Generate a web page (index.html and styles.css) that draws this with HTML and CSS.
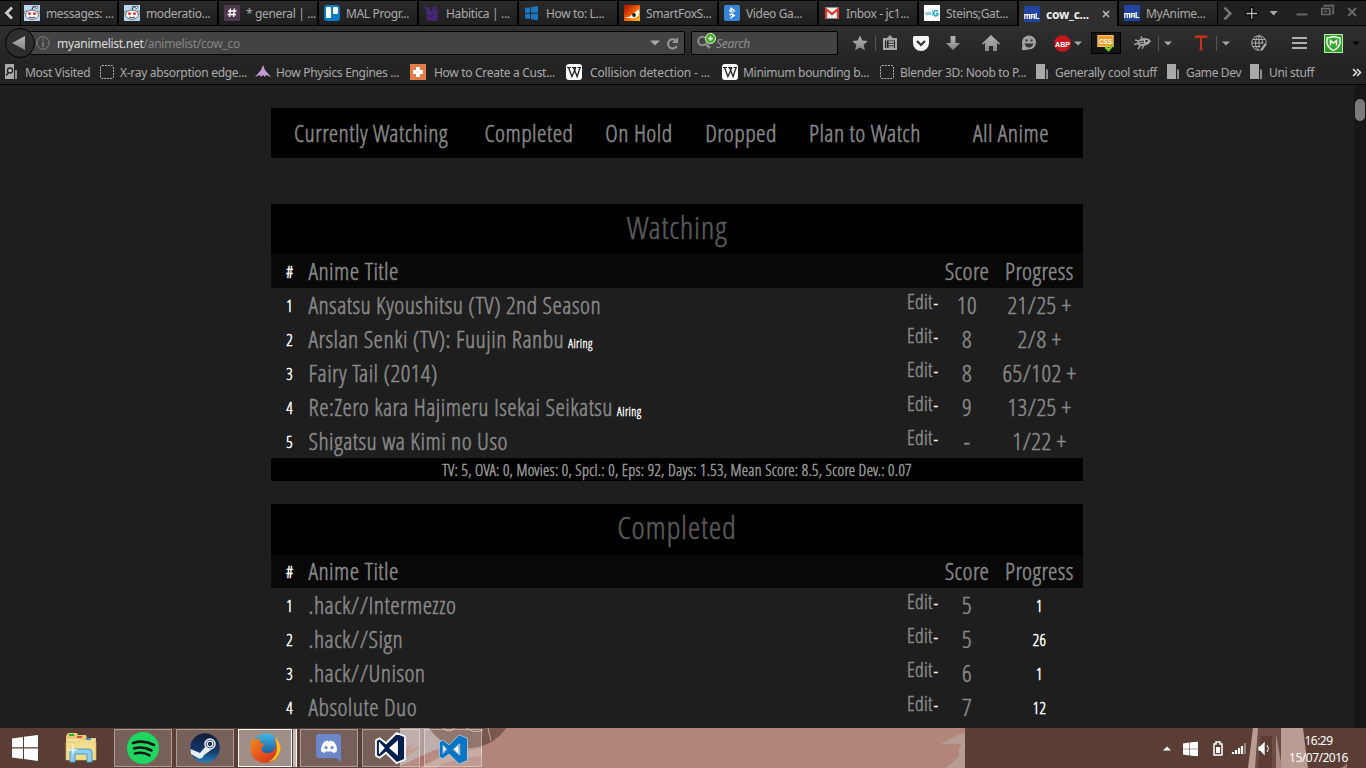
FILE: index.html
```html
<!DOCTYPE html>
<html lang="en">
<head>
<meta charset="utf-8">
<title>cow_co's Anime List</title>
<link rel="stylesheet" href="styles.css">
</head>
<body>
<svg width="0" height="0" class="defs">
  <defs>
    <linearGradient id="grey" x1="0" y1="0" x2="0" y2="1"><stop offset="0" stop-color="#b5b5b5"/><stop offset="1" stop-color="#858585"/></linearGradient>
    <linearGradient id="fox" x1="0" y1="0" x2="1" y2="1"><stop offset="0" stop-color="#a80b00"/><stop offset=".5" stop-color="#f05a00"/><stop offset="1" stop-color="#ffc21a"/></linearGradient>
    <linearGradient id="steamg" x1="0" y1="0" x2="0" y2="1"><stop offset="0" stop-color="#101b38"/><stop offset=".6" stop-color="#14386a"/><stop offset="1" stop-color="#2581b8"/></linearGradient>
    <linearGradient id="ffo" x1="0" y1="0" x2="1" y2="1"><stop offset="0" stop-color="#f08a1c"/><stop offset=".5" stop-color="#e8551c"/><stop offset="1" stop-color="#c72b18"/></linearGradient>
    <linearGradient id="blue" x1="0" y1="0" x2="0" y2="1"><stop offset="0" stop-color="#3db8e8"/><stop offset="1" stop-color="#123c82"/></linearGradient>
    <symbol id="reddit" viewBox="0 0 16 16"><rect width="16" height="16" fill="#b9d7f4"/><path d="M8 5 9 1.5l3 .7" stroke="#333" fill="none"/><circle cx="12.5" cy="2.3" r="1.2" fill="#fff" stroke="#333" stroke-width=".7"/><circle cx="2" cy="7.5" r="1.6" fill="#fff" stroke="#555" stroke-width=".7"/><circle cx="14" cy="7.5" r="1.6" fill="#fff" stroke="#555" stroke-width=".7"/><ellipse cx="8" cy="9.7" rx="6.4" ry="4.6" fill="#fff" stroke="#444" stroke-width=".8"/><circle cx="5.5" cy="8.7" r="1.4" fill="#e5241b"/><circle cx="10.5" cy="8.7" r="1.4" fill="#e5241b"/><path d="M5 12q3 1.6 6 0" fill="none" stroke="#444"/></symbol>
    <symbol id="dash" viewBox="0 0 16 16"><rect x="1.5" y="1.5" width="13" height="13" rx="1.5" fill="none" stroke="#b5b5b5" stroke-dasharray="2 1"/></symbol>
    <symbol id="folder" viewBox="0 0 16 16"><path d="M1 0h9v15H1z" fill="#a9a9a9"/><path d="M11 8V5l2 1v9h-2" fill="#8f8f8f"/></symbol>
    <symbol id="wiki" viewBox="0 0 16 16"><rect width="16" height="16" rx="3" fill="#fff"/><path d="M1 3.5h4M6 3.5h4M11.5 3.5H15" stroke="#222"/><path d="m2.5 3.5 3.4 9 4-9M7.5 3.5l3.6 9 3-9" fill="none" stroke="#222" stroke-width="1.3"/></symbol>
    <symbol id="mal" viewBox="0 0 16 16"><rect width="16" height="16" fill="#2144a0"/><path d="M.8 13V8.700h4.700V13M3.200 8.700V13M7.200 13V8.700h3.300V13M7.200 11h3.300M12.200 7v5.500h3.200" fill="none" stroke="#fff" stroke-width="1.200"/></symbol>
    <symbol id="win" viewBox="0 0 26 26"><path d="m0 3.5 11-1.6v10.4H0zM12 1.8 26 0v12.3H12zM0 13.5h11V24L0 22.4zM12 13.5h14V26l-14-1.9z"/></symbol>
    <symbol id="tri" viewBox="0 0 10 6"><path d="M0 .5h10L5 5.5z"/></symbol>
    <symbol id="vs" viewBox="0 0 32 32"><path d="M21.5 1 30 4.5v23L21.5 31 11 20.8 4.6 25.6 1 23.8V8.2l3.6-1.8L11 11.2zM22 10.2 15.4 16l6.6 5.8zM4.8 11.8v8.4L8.600 16z" fill-rule="evenodd"/></symbol>
  </defs>
</svg>

<header class="chrome">
  <div class="tabs">
    <div class="scroll-left"><svg width="12" height="14" viewBox="0 0 12 14"><path d="M9 1.500 3.500 7 9 12.500" fill="none" stroke="#ccc" stroke-width="2.800"/></svg></div>
    <div class="tab first"><svg class="fav"><use href="#reddit"/></svg><span>messages: ...</span></div>
    <div class="tab"><svg class="fav"><use href="#reddit"/></svg><span>moderatio...</span></div>
    <div class="tab"><svg class="fav" viewBox="0 0 16 16"><rect width="16" height="16" fill="#4d394b"/><path d="M6.500 3.500 5.500 12M10.500 3.500 9.500 12M4 6h8.500M3.500 9.500H12" stroke="#fff" stroke-width="1.500"/></svg><span>* general | ...</span></div>
    <div class="tab"><svg class="fav" viewBox="0 0 16 16"><rect width="16" height="16" rx="3" fill="#0a7bc2"/><rect x="2" y="2" width="5" height="11" rx="1" fill="#fff"/><rect x="9" y="2" width="5" height="7" rx="1" fill="#fff"/></svg><span>MAL Progr...</span></div>
    <div class="tab"><svg class="fav" viewBox="0 0 16 16"><path d="m0 0 5 3 2 3 2-1-1-2 2-2h3l-1 2 3 1-2 2 1 2-1 3 2 1-2 2 1 3H8l1-1-3-1-1 2H2l2-3-2-2 2-1-3-3 2-1z" fill="#432874"/><path d="M10 4h3M8 8l3 3M5 11h3" stroke="#242424" stroke-width=".8"/></svg><span>Habitica | ...</span></div>
    <div class="tab"><svg class="fav" viewBox="0 0 16 16"><path d="m1 3 5-.8v5.500H1zM7 2l7-1v6.700H7zM1 8.700h5v5.300l-5-.8zM7 8.700h7v6.500l-7-1z" fill="#1a78c2"/></svg><span>How to: L...</span></div>
    <div class="tab"><svg class="fav" viewBox="0 0 16 16"><rect width="16" height="16" fill="url(#fox)"/><path d="m0 13 5-1 10-8q1 6-2 8-3 2-7 1z" fill="#fff"/><circle cx="10" cy="10" r="1.900" fill="#221"/></svg><span>SmartFoxS...</span></div>
    <div class="tab"><svg class="fav" viewBox="0 0 16 16"><rect width="16" height="16" rx="2" fill="#3584d8"/><path d="m7 2 4.500 4L8 8.500 5 6zM8 8l3.500 2.500L6 14l1-3-2-2z" fill="#fff"/><path d="m8 5 1.500 1.500L7 8M7 11l1-1" stroke="#3584d8" fill="none"/></svg><span>Video Ga...</span></div>
    <div class="tab"><svg class="fav" viewBox="0 0 16 16"><path d="M1 2.500h14v11H1z" fill="#eee"/><path d="M2 13.500V4l6 5 6-5v9.500" fill="none" stroke="#d9392b" stroke-width="2.200"/></svg><span>Inbox - jc1...</span></div>
    <div class="tab"><svg class="fav" viewBox="0 0 16 16"><rect width="16" height="16" fill="#fff"/><text x="1" y="9.500" class="usg">us</text><path d="M8.500 4v7" stroke="#9cd"/><path d="M14 6.500q-2.500-2-4 .2-1 3.300 1.300 4.200 2.700.2 2.700-2.400h-2" fill="none" stroke="#20a6c6" stroke-width="1.500"/></svg><span>Steins;Gat...</span></div>
    <div class="tab active"><svg class="fav"><use href="#mal"/></svg><span>cow_c...</span><svg class="close" width="8" height="8" viewBox="0 0 8 8"><path d="m1 1 6 6M7 1 1 7" stroke="#b5b5b5" stroke-width="1.700"/></svg></div>
    <div class="tab"><svg class="fav"><use href="#mal"/></svg><span>MyAnime...</span></div>
    <svg class="strip-end" width="148" height="25" viewBox="0 0 148 25" fill="none">
      <path d="m6.500 6.500 6 6-6 6" stroke="#777" stroke-width="2.500"/>
      <path d="M27.500 12.500h13M34 6v13" stroke="#000" stroke-width="3.500"/><path d="M28.500 12.500h11M34 7v11" stroke="#bbb" stroke-width="1.300"/>
      <path d="M52 10h8l-4 4.500z" fill="#aaa"/>
      <path d="M79 13.500h11" stroke="#666" stroke-width="2"/>
      <path d="M107 6V4.500h9v8h-1.500M104.500 7.500h8v6h-8zM107 10.500h3" stroke="#686868" stroke-width="1.700"/>
      <path d="m131 7 8 8M139 7l-8 8" stroke="#686868" stroke-width="2"/>
    </svg>
  </div>

  <div class="toolbar">
    <div class="back"><svg width="14" height="16" viewBox="0 0 14 16"><path d="M13 1v14L0 8z" fill="url(#grey)"/></svg></div>
    <div class="urlbar">
      <svg width="14" height="14" viewBox="0 0 14 14"><circle cx="7" cy="7" r="6.200" fill="none" stroke="#858585"/><path d="M7 6v5M7 3.200v1.600" stroke="#858585" stroke-width="1.400"/></svg>
      <span class="url"><b>myanimelist.net</b>/animelist/cow_co</span>
      <svg class="drop" width="10" height="6" fill="#aaa"><use href="#tri"/></svg>
      <svg class="reload" width="13" height="13" viewBox="0 0 13 13"><path d="M9.500 3.200A4.600 4.600 0 1 0 10.800 9" fill="none" stroke="#999" stroke-width="2"/><path d="M12 0v6H6z" fill="#999"/></svg>
    </div>
    <div class="search">
      <svg width="20" height="18" viewBox="0 0 20 18"><circle cx="6.500" cy="9" r="4.300" fill="none" stroke="#8c8c8c" stroke-width="2"/><path d="m10 12 4 4" stroke="#8c8c8c" stroke-width="2.800"/><circle cx="14.500" cy="6.500" r="5" fill="#3fae1e" stroke="#e8f5e0"/><path d="M14.500 4v5M12 6.500h5" stroke="#fff" stroke-width="1.300"/></svg>
      <i>Search</i>
    </div>
    <div class="tools">
      <div class="tool"><svg width="16" height="16" viewBox="0 0 16 16"><path d="m8 .5 2.300 5 5.500.6-4.100 3.700 1.200 5.500L8 12.500l-4.900 2.800 1.200-5.500L.2 6.100l5.500-.6z" fill="url(#grey)"/></svg></div>
      <div class="tool sep"><svg width="16" height="16" viewBox="0 0 16 16"><path d="M1 3h4l3-3 3 3h4v12H1z" fill="#a6a6a6"/><path d="M3 5.500h10v7.500H3z" fill="#222"/><path d="M4 7h1M6.500 7H12M4 9.500h1M6.500 9.500H12M4 12h1M6.500 12H12" stroke="#bbb" stroke-width="1.300"/></svg></div>
      <div class="tool"><svg width="16" height="15" viewBox="0 0 16 15"><path d="M0 1.500Q0 0 1.500 0h13Q16 0 16 1.500V7a8 8 0 0 1-16 0z" fill="#f5f5f5"/><path d="m4 5 4 4 4-4" fill="none" stroke="#333" stroke-width="2.200"/></svg></div>
      <div class="tool"><svg width="16" height="16" viewBox="0 0 16 16"><path d="M5.500 1h5v7H15l-7 7-7-7h4.500z" fill="url(#grey)"/></svg></div>
      <div class="tool home"><svg width="18" height="16" viewBox="0 0 18 16"><path d="m9 0 9 8.500-1 1.200-2-1.800V16h-4v-5H7v5H3V7.900L1 9.700 0 8.500z" fill="url(#grey)"/></svg></div>
      <div class="tool smile"><svg width="16" height="16" viewBox="0 0 16 16"><circle cx="8" cy="7.500" r="7" fill="#a3a3a3"/><path d="M1 10v5h6z" fill="#a3a3a3"/><path d="M3.500 8.500h9q-1 4-4.500 4t-4.500-4M4.500 4.500h2v2h-2zM9.500 4.500h2v2h-2z" fill="#333"/></svg></div>
      <div class="tool abp"><svg width="17" height="17" viewBox="0 0 17 17"><path d="M5 .5h7L16.500 5v7L12 16.500H5L.5 12V5z" fill="#c9151b"/><text x="8.500" y="11.500" text-anchor="middle" class="abp-t" textLength="15" lengthAdjust="spacingAndGlyphs">ABP</text></svg></div>
      <div class="tool caret"><svg width="8" height="5" fill="#a5a5a5"><use href="#tri"/></svg></div>
      <div class="tool css"><svg width="18" height="18" viewBox="0 0 18 18"><rect x=".5" y="1" width="16" height="12" fill="#ef9a2b"/><rect x="1" y="1.500" width="15" height="11" fill="none" stroke="#f8c46f"/><text x="8.500" y="9.500" text-anchor="middle" class="css-t" textLength="13" lengthAdjust="spacingAndGlyphs">CSS</text><path d="m8.500 13 3 3 4.500-5" fill="none" stroke="#7ed321" stroke-width="2.500"/></svg></div>
      <div class="tool bug"><svg width="18" height="14" viewBox="0 0 18 14"><path d="M3 7q2-5 7-5 5 0 7 3-2 4-7 5H5z" fill="#a0a0a0"/><circle cx="12.500" cy="5" r="1.800" fill="#222" stroke="#ddd" stroke-width=".8"/><path d="M5 5 1 4M4 7.500l-4 1M7 9l-3 4M10 9l-2 4M8 3 7 0" stroke="#a0a0a0" stroke-width="1.300"/><path d="m5 6 5-1M6 8l4-1" stroke="#333"/></svg></div>
      <div class="tool wcaret sep"><svg width="8" height="5" fill="#a5a5a5"><use href="#tri"/></svg></div>
      <div class="tool bigt"><svg width="14" height="16" viewBox="0 0 14 16"><path d="M.5 4 1 .5h12l.5 3.500-1.500-1.300H8V14l1.500 1.300h-5L6 14V2.700H2z" fill="#cf321d"/></svg></div>
      <div class="tool wcaret sep"><svg width="8" height="5" fill="#a5a5a5"><use href="#tri"/></svg></div>
      <div class="tool globe"><svg width="17" height="17" viewBox="0 0 17 17" fill="none" stroke="#aaa"><circle cx="8" cy="8" r="7.300"/><ellipse cx="8" cy="8" rx="3.500" ry="7.300"/><path d="M8 1v14M1 8h14M2 4.500h12M2 11.500h12"/><path d="m15.500 8-6 8" stroke="#222" stroke-width="5"/><path d="m15 8.500-5 7" stroke="#aaa" stroke-width="2.200"/></svg></div>
      <div class="tool menu"><svg width="15" height="12" viewBox="0 0 15 12"><path d="M0 1h15M0 6h15M0 11h15" stroke="#b0b0b0" stroke-width="2"/></svg></div>
      <div class="tool mcafee"><svg width="19" height="19" viewBox="0 0 19 19"><rect width="19" height="19" fill="#2f9e26"/><rect x=".5" y=".5" width="18" height="18" fill="none" stroke="#b9e7a9"/><path d="m9.500 2.500 6.500 1.500v5q-1 5-6.500 7.500Q4 14 3 9V4z" fill="#38a52d" stroke="#fff" stroke-width="1.300"/><path d="M6.500 11.500V6.500l3 2.500 3-2.500v5" fill="none" stroke="#fff" stroke-width="1.500"/></svg></div>
      <div class="tool last"><svg width="8" height="5" fill="#050505"><use href="#tri"/></svg></div>
    </div>
  </div>

  <div class="bookmarks">
    <div class="bm"><svg class="fav" viewBox="0 0 16 16"><path d="M1 0h9v15H1z" fill="#aaa"/><path d="M11 9V6h2v9h-2" fill="#8f8f8f"/><circle cx="6" cy="6.500" r="2.500" fill="#bbb" stroke="#222" stroke-width="1.300"/><path d="m4.500 8.500-2.500 3" stroke="#222" stroke-width="1.500"/></svg><span>Most Visited</span></div>
    <div class="bm"><svg class="fav"><use href="#dash"/></svg><span>X-ray absorption edge...</span></div>
    <div class="bm"><svg class="fav" viewBox="0 0 16 16"><path d="m8 1 2 5 6 7-5-2-1 2-2-2-2 2-1-2-5 2 6-7z" fill="#c39bd0"/></svg><span>How Physics Engines ...</span></div>
    <div class="bm w3"><svg class="fav" viewBox="0 0 16 16"><rect width="16" height="16" fill="#e27c4c"/><path d="M6 3h4v3h3v4h-3v3H6v-3H3V6h3z" fill="#fff"/></svg><span>How to Create a Cust...</span></div>
    <div class="bm w3"><svg class="fav"><use href="#wiki"/></svg><span class="wide">Collision detection - ...</span></div>
    <div class="bm"><svg class="fav"><use href="#wiki"/></svg><span>Minimum bounding b...</span></div>
    <div class="bm"><svg class="fav"><use href="#dash"/></svg><span>Blender 3D: Noob to P...</span></div>
    <div class="bm fo"><svg class="fav"><use href="#folder"/></svg><span>Generally cool stuff</span></div>
    <div class="bm fo"><svg class="fav"><use href="#folder"/></svg><span>Game Dev</span></div>
    <div class="bm fo"><svg class="fav"><use href="#folder"/></svg><span>Uni stuff</span></div>
    <div class="more"><svg width="10" height="9" viewBox="0 0 10 9"><path d="m1 1 3.500 3.500L1 8M5 1l3.500 3.500L5 8" fill="none" stroke="#ddd" stroke-width="1.600"/></svg></div>
  </div>
</header>

<div class="viewport">
  <main class="list">
    <nav class="status">
      <a>Currently Watching</a><a>Completed</a><a>On Hold</a><a>Dropped</a><a>Plan to Watch</a><a>All Anime</a>
    </nav>

    <section class="group">
      <h2>Watching</h2>
      <div class="row head"><b class="n">#</b><span>Anime Title</span><span></span><span class="c">Score</span><span class="c p">Progress</span></div>
      <div class="row"><span class="n">1</span><span>Ansatsu Kyoushitsu (TV) 2nd Season</span><span class="e">Edit<i>-</i></span><span class="c">10</span><span class="c p">21/25 +</span></div>
      <div class="row"><span class="n">2</span><span>Arslan Senki (TV): Fuujin Ranbu <small>Airing</small></span><span class="e">Edit<i>-</i></span><span class="c">8</span><span class="c p">2/8 +</span></div>
      <div class="row"><span class="n">3</span><span>Fairy Tail (2014)</span><span class="e">Edit<i>-</i></span><span class="c">8</span><span class="c p">65/102 +</span></div>
      <div class="row"><span class="n">4</span><span>Re:Zero kara Hajimeru Isekai Seikatsu <small>Airing</small></span><span class="e">Edit<i>-</i></span><span class="c">9</span><span class="c p">13/25 +</span></div>
      <div class="row"><span class="n">5</span><span>Shigatsu wa Kimi no Uso</span><span class="e">Edit<i>-</i></span><span class="c">-</span><span class="c p">1/22 +</span></div>
      <div class="totals">TV: 5, OVA: 0, Movies: 0, Spcl.: 0, Eps: 92, Days: 1.53, Mean Score: 8.5, Score Dev.: 0.07</div>
    </section>

    <section class="group">
      <h2>Completed</h2>
      <div class="row head"><b class="n">#</b><span>Anime Title</span><span></span><span class="c">Score</span><span class="c p">Progress</span></div>
      <div class="row"><span class="n">1</span><span>.hack//Intermezzo</span><span class="e">Edit<i>-</i></span><span class="c">5</span><span class="c p n">1</span></div>
      <div class="row"><span class="n">2</span><span>.hack//Sign</span><span class="e">Edit<i>-</i></span><span class="c">5</span><span class="c p n">26</span></div>
      <div class="row"><span class="n">3</span><span>.hack//Unison</span><span class="e">Edit<i>-</i></span><span class="c">6</span><span class="c p n">1</span></div>
      <div class="row"><span class="n">4</span><span>Absolute Duo</span><span class="e">Edit<i>-</i></span><span class="c">7</span><span class="c p n">12</span></div>
    </section>
  </main>
  <div class="scrollbar"><div class="thumb"></div></div>
</div>

<footer class="taskbar">
  <svg class="wall" width="1366" height="40" viewBox="0 0 1366 40">
    <rect x="400" width="565" height="40" fill="#b2857a"/>
    <path d="M400 0h30q12 20 42 20l-22 3-50 17z" fill="#b09e9a"/>
    <path d="m400 22 14-6-4 5 12-2-22 14z" fill="#b58a7e"/>
    <path d="m400 38 34-16q25-6 48-6l-40 12-24 12h-18z" fill="#a87468"/>
    <path d="m418 40 26-12 38-8v8q-36 4-46 12z" fill="#bd9b90"/>
    <path d="M429 0h77q-12 18-35 20-26 3-42-20" fill="#7b584e"/>
    <path d="M443 0q6 6 12 0M466 0q9 6 17 2M488 0l3 13" stroke="#c2a69d" fill="none"/>
    <path d="M965 5q-15 4-25 12 12-2 20-1 3 0-1 4v8q-6 7-14 12h20z" fill="#b69d94"/>
    <path d="M1253 0h28v40h-33z" fill="#6d4c43"/><path d="M1253 0h5l-3 40h-7zM1281 0h22l5 40h-27z" fill="#b99d93"/><path d="m1276 6 6 34h-6z" fill="#a98a80"/><path d="M1261 8h11v32h-14z" fill="#5c3d34"/><path d="M1340 40q6-2 7-6v6" fill="#9a7a6c"/>
  </svg>
  <div class="task start"><svg width="26" height="26" fill="#fff"><use href="#win"/></svg></div>
  <div class="task explorer"><svg width="34" height="32" viewBox="0 0 34 32"><path d="M2 4 4 1h9l1 2h8l1 3h9v22H2z" fill="#e6cb70"/><path d="M3 7h28v19H3z" fill="#f4e3a0"/><path d="M2 10h13l2-3h8l2 3h5v18H2z" fill="#f2dc8e" stroke="#d7b85b" stroke-width=".6"/><path d="M5 2h5v2H5z" fill="#2fae3a"/><path d="M13 4h5v2h-5z" fill="#d9503a"/><path d="M22 6h5v2h-5z" fill="#3c8fd0"/><path d="M6 30V20q0-3 3-3h16q3 0 3 3v10h-5v-8H11v8z" fill="#8fcfe9" stroke="#4a9cc4"/><path d="m9 11 1 6 5 1-5 1-1 5-1-5-5-1 5-1z" fill="#fff" opacity=".8"/></svg></div>
  <div class="task btn"><svg width="32" height="32" viewBox="0 0 32 32"><circle cx="16" cy="16" r="16" fill="#1ed760"/><path d="M6 11q11-3.500 21 2M7 16.500q9-2.600 17.500 2M8 21.500q8-2 14.500 1.800" fill="none" stroke="#191414" stroke-width="2.600" stroke-linecap="round"/></svg></div>
  <div class="task btn"><svg width="30" height="30" viewBox="0 0 30 30"><circle cx="15" cy="15" r="14.700" fill="url(#steamg)"/><path d="m.5 16 9.500 4 6-7 5 4-7 5q-2 5-6 3L1 21z" fill="#e9eef4"/><circle cx="20" cy="11" r="5" fill="#1b3156" stroke="#e9eef4" stroke-width="1.500"/><circle cx="20" cy="11" r="2.800" fill="none" stroke="#e9eef4" stroke-width="1.300"/></svg></div>
  <div class="task btn on"><svg width="31" height="31" viewBox="0 0 31 31"><circle cx="16" cy="14" r="13.500" fill="url(#blue)"/><path d="M3 4q1 2 2 3 3-2 6-1-2 2 0 4l4 1-3 3q-2 4 3 6 7 1 10-4 2-5-1-11 8 5 6 13-2 11-15 12Q1 29 .5 16 .5 9 3 4" fill="url(#ffo)"/><path d="M25 4q6 6 5.500 13-3 11-12 12 9-6 8.500-14-.5-7-2-11" fill="#f9c32e"/></svg></div>
  <div class="task btn"><svg width="26" height="28" viewBox="0 0 26 28"><path d="M3 0h20q2 0 2 2v26l-5-4H3q-3 0-3-3V3q0-3 3-3" fill="#6c86cc"/><path d="M5 17q0-6 3-9 2-1.500 4-1.500l.5 1h1l.5-1q2 0 4 1.500 3 3 3 9-2 2-4 2l-1-1.500H9.500L8.500 19Q6 18.500 5 17" fill="#fff"/><circle cx="10" cy="13.500" r="1.600" fill="#6c86cc"/><circle cx="16" cy="13.500" r="1.600" fill="#6c86cc"/></svg></div>
  <div class="task btn"><svg width="32" height="32" viewBox="0 0 32 32"><path d="m5 12 4 4-4 4zM22 10v12l-7-6z" fill="#fff"/><g fill="#021f50" stroke="#fff" stroke-width="1.800"><use href="#vs"/></g></svg></div>
  <div class="task btn"><svg width="32" height="31" viewBox="-1 -1 34 34" fill="#0b75c4" stroke="#b9d4e6" stroke-width=".8"><path d="M4.800 11.800v8.400L8.600 16zM22 10.200 15.400 16l6.600 5.800z" fill="#fff"/><use href="#vs"/></svg></div>
  <div class="tray">
    <svg width="121" height="40" viewBox="0 0 121 40"><path d="m3 22.500 4-4 4 4z" fill="#fff"/><g transform="translate(23 13.500) scale(.58)" fill="#fff"><use href="#win" width="26" height="26"/></g><path d="M56 14h4v2h2v11h-8V16h2z" fill="none" stroke="#fff" stroke-width="1.500"/><path d="M56 19h4v6h-4z" fill="#fff"/><path d="M73 26v-2M76 26v-4M79 26v-6M82 26v-8" stroke="#fff" stroke-width="2.200"/><path d="M85 26V15" stroke="#9a857e" stroke-width="2"/><path d="M98 18h2l5-5v15l-5-5h-2z" fill="#fff" stroke="#333" stroke-width=".6"/><path d="M107 17q3 3.500 0 7" fill="none" stroke="#fff"/></svg>
    <div class="clock"><span>16:29</span><span>15/07/2016</span></div>
  </div>
</footer>
</body>
</html>
```
FILE: styles.css
```css
* { box-sizing: border-box; }
body { margin: 0; width: 1366px; height: 768px; overflow: hidden; display: flex; flex-direction: column; background: #1e1e1e; font-family: "Noto Sans", "Open Sans", sans-serif; font-size: 12px; color: #aaa; letter-spacing: -.3px; }
.defs { position: absolute; }
svg { flex: none; display: block; }
.fav { width: 16px; height: 16px; }

/* Browser chrome */
.chrome { height: 85px; flex: none; background: #232323; border-bottom: 1px solid #000; }
.tabs { display: flex; height: 26px; border-top: 1px solid #000; border-bottom: 1px solid #000; background: #202020; }
.scroll-left { width: 20px; display: flex; align-items: center; padding-left: 3px; }
.tab { width: 100px; display: flex; align-items: center; gap: 6px; padding-left: 5px; border-left: 2px solid #000; background: linear-gradient(#2a2a2a, #1e1e1e); white-space: nowrap; }
.tab.first { width: 97px; padding-left: 3px; border-left-width: 1px; }
.tab span { letter-spacing: -.35px; line-height: 24px; padding-top: 2px; }
.tab.active { background: #2f2f2f; height: 25px; }
.tab.active span { color: #eee; font-weight: 700; letter-spacing: -.25px; }
.close { margin-left: 7px; }
.strip-end { border-left: 1px solid #000; }
.toolbar { display: flex; height: 34px; background: linear-gradient(#2f2f2f, #242424); }
.back { width: 30px; height: 30px; margin: 2px 0 0 5px; border: 1px solid #000; border-radius: 50%; background: #2d2d2d; display: flex; align-items: center; padding-left: 6px; z-index: 1; flex: none; }
.urlbar { width: 656px; height: 24px; margin: 5px 0 0 -6px; padding: 0 5px 0 6px; border: 1px solid #000; background: #434343; display: flex; align-items: center; border-radius: 2px; flex: none; }
.url { margin-left: 7px; flex: 1; color: #868686; letter-spacing: -.27px; }
.url b { font-weight: 400; color: #ddd; }
.drop { margin-right: 6px; }
.search { width: 147px; height: 24px; margin: 5px 0 0 6px; border: 1px solid #000; border-radius: 2px; background: #434343; display: flex; padding-left: 4px; color: #909090; line-height: 23px; flex: none; }
.tools { display: flex; padding-left: 7px; }
.tool { width: 30px; height: 34px; display: flex; align-items: center; justify-content: center; }
.tool:nth-child(3), .tool:nth-child(4) { width: 32px; }
.sep { background: linear-gradient(#555, #555) 0 50% / 1px 15px no-repeat; }
.tool.home { width: 44px; }
.tool.smile { width: 32px; }
.tool.abp { width: 18px; margin-left: 8px; }
.tool.caret { width: 14px; }
.tool.css { margin: 6px 0 0 6px; height: 22px; border: 1px solid #000; background: #151515; }
.tool.bug { margin-left: 7px; }
.tool.wcaret { width: 20px; }
.tool.bigt { margin-left: 8px; }
.tool.globe { width: 32px; margin-left: 7px; }
.tool.menu { width: 32px; margin-left: 8px; }
.tool.mcafee { width: 28px; margin-left: 4px; }
.tool.last { width: 18px; }
.abp-t { font: 700 8px "Liberation Sans", sans-serif; fill: #fff; letter-spacing: 0; }
.css-t { font: 700 8px "Liberation Sans", sans-serif; fill: #fff; letter-spacing: 0; }
.usg { font: 700 6px "Liberation Sans", sans-serif; fill: #35a8c8; }
.bookmarks { display: grid; grid-template-columns: 95px 156px 155px 156px 156px 157px 156px 131px 83px 97px auto; height: 24px; padding-left: 4px; background: #232323; white-space: nowrap; align-items: center; }
.bm { display: flex; align-items: center; gap: 5px; }
.bm.w3 { gap: 8px; }
.bm.fo { gap: 4px; letter-spacing: -.35px; }
.wide { letter-spacing: -.15px; }
.more { padding-left: 6px; }

/* Page */
.viewport { flex: none; height: 643px; display: flex; overflow: hidden; }
.list { width: 812px; margin-left: 271px; padding-top: 23px; font-family: "Open Sans Condensed Light", "Open Sans", sans-serif; font-size: 24px; line-height: 34px; letter-spacing: .45px; color: #8a8a8a; -webkit-text-stroke: .5px; white-space: nowrap; }
.status { height: 50px; background: #000; display: grid; grid-template-columns: 200px 116px 104px 100px 148px 144px; line-height: 50px; text-align: center; }
.group { margin-top: 23px; }
.status + .group { margin-top: 46px; }
h2 { margin: 0; height: 50px; background: #000; color: #5a5a5a; font-size: 32px; font-weight: 400; line-height: 46px; letter-spacing: .7px; text-align: center; }
.row { display: grid; grid-template-columns: 37.5px 1fr 37px 46px 93px; height: 34px; }
.head { background: #080808; }
.n { font-size: 16px; color: #fff; text-align: center; padding-top: 1px; }
b.n { font-weight: 700; -webkit-text-stroke: 0; }
.c { text-align: center; }
.p { padding-left: 6px; }
.e { font-size: 20px; line-height: 27px; letter-spacing: .3px; }
.e i { font-style: normal; font-size: 16px; color: #fff; margin-left: 1px; }
small { font-size: 12px; font-weight: 700; color: #fff; letter-spacing: .45px; -webkit-text-stroke: 0; margin-left: -1px; }
.totals { height: 23px; background: #000; font-size: 16px; line-height: 24px; text-align: center; letter-spacing: .29px; color: #999; }
.scrollbar { width: 12px; margin-left: auto; background: #171717; padding: 14px 0 0 1px; }
.thumb { width: 10px; height: 22px; border-radius: 5px; background: #7a7a7a; }

/* Taskbar */
.taskbar { position: relative; flex: none; height: 40px; background: #5a3e35; display: flex; align-items: center; }
.wall { position: absolute; left: 0; top: 0; }
.task { position: relative; width: 58px; height: 38px; margin-right: 4px; display: flex; align-items: center; justify-content: center; }
.start { width: 50px; margin: 0; }
.explorer { width: 62px; margin: 0 2px 0 0; }
.btn { border: 1px solid rgba(255, 255, 255, .38); background: rgba(255, 255, 255, .18); }
.on { width: 54px; margin-right: 8px; background: #a08f88; border-color: #fff; box-shadow: 1px 0 #5a3e35, 4px 0 #c3b8b3, 5px 0 #fff; }
.tray { position: relative; margin-left: auto; display: flex; color: #fff; }
.clock { width: 75px; height: 40px; display: flex; flex-direction: column; align-items: center; line-height: 17px; padding: 4px 0 0 0; margin-right: 10px; letter-spacing: -.5px; }
```
